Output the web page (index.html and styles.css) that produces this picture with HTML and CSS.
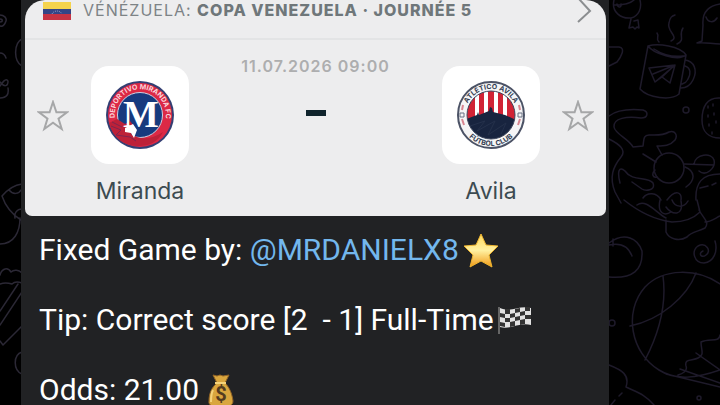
FILE: index.html
```html
<!DOCTYPE html>
<html lang="en">
<head>
    <meta charset="UTF-8">
    <meta name="viewport" content="width=device-width, initial-scale=1">
    <title>Fixed Game</title>
    <link rel="stylesheet" href="styles.css">
</head>
<body>
<!-- chat wallpaper -->
<svg class="wallpaper wallpaper-left" width="22" height="405" viewBox="0 0 22 405" aria-hidden="true">
    <path d="M0 15c4 0 7 3 6 6s-3 6-6 5M0 19c3 0 3 3 0 3M0 53c3 0 5 2 6 5M22 39c-8 4-9 22 0 27M0 82c4 5 8 5 8-1-2-4-6 2-8 5M0 98c7 0 9-4 8-10"/>
    <path d="M22 184c-8 1-14 5-20 12 3 9 8 17 19 24M9 190c4 5 10 4 12 0M22 209c-5 0-8 4-7 9M20 218c0 14-6 26-20 26"/>
    <path d="M0 275c2-7 8-8 11-3 3-3 8-2 11 1M0 284c5-2 9-1 12 0 3-3 7-2 10-1M18 284 0 311M22 292 0 325M22 326 3 345l-3-4M22 352c-9 3-9 18 0 22"/>
</svg>
<svg class="wallpaper wallpaper-right" width="120" height="405" viewBox="600 0 120 405" aria-hidden="true">
    <path d="M614 0c-3 12 7 19 17 18 8-2 11-10 9-18M614 5c8 0 16-1 20-5M617 4c1 5 5 3 4 0M631 19l-2 9 4-1 2 2 2-2 2 1-1-8-4 1"/>
    <path d="M648 46c10-3 32 0 38 9-8 7-33-2-38-9l-8 43c8 9 31 12 39 5l7-39M654 49c9 6 19 8 29 7M685 60c9 1 13 10 8 20-3 6-7 8-12 8M685 66c6 2 6 8 3 13-2 4-3 4-6 5"/>
    <path d="M649 68l26-3-5 18-8-6-7 5zM653 74l22-9-20 17M662 77l13-12M659 42c-4-4 1-5-2-9M671 41c9-4-5-10-2-18 1-6 3-7 6-8M677 44c9-4 1-9 6-16"/>
    <path d="M720 4c-13 2-18 9-17 21l-1 16-5 2c9-1 14 1 23 1M706 17c2 6 8 6 11 1M609 47h10c7 1 2 10-2 15l-8 4"/>
    <circle cx="686" cy="110" r="3"/>
    <path d="M609 116c9-7 23-7 34-6 6 2 5 8-2 8-14-2-28 0-27 9 1 7 15 12 19 20l10-1c1-6 0-11 6-11 7 0 13 1 20-3 6-2 9 3 6 8-5 6-11 6-18 6l5 9M609 139c10 5 18 11 12 18-8 10-12 20-6 35l6 11"/>
    <circle cx="669" cy="168" r="15"/>
    <path d="M643 154l13 8M684 164l30 1M685 167c10 4 11 13 1 20M694 164c1-10 18-12 20-4s-8 17-15 11M620 183c-3-12-1-17 5-12 7 11 23 5 28 12 3 8-8 8-11 6l-10-7M643 198c4-6 14-6 18 2M667 200c9-12 15-7 14 0M720 174c-18 0-25 9-24 26M700 188l8-2m4-1 4-2M655 170c-4 4-2 8 2 7"/>
    <path d="M720 98c-13-1-18 9-18 22 0 12 7 18 18 18M708 106v2m5-4v2m-5 9v2m6-4v2m-5 9v2m7-5v2m-4 9v2"/>
    <path d="M624 200c15 12 32 20 48 22 11 0 21-3 28-10l-3-12M637 205c9-7 19 8 29 13M660 200c-3 14 5 16 11 12M672 200c3 8 12 8 16 1M681 201c3 16-9 14-15 6M699 210c4 8 11 12 6 18-7 4-13 3-18 9-8 5-18 2-21-5v-12M720 216c-6 3-10 6-15 6"/>
    <path d="M609 243c16-12 29-4 33 8 1 19-9 28-33 26M609 245c13-3 20 3 23 11M613 239v7M715 241c3 10-1 21-11 22-10 0-13-12-6-17 8-4 14 5 8 9-5 4-8-2-3-4"/>
    <path d="M720 284c-23-16-57-16-75 3-22 25-14 66 14 83 17 11 38 8 61 0M663 276c4 30-5 59-18 84M696 273c-9 24-36 47-66 53M720 335c-1 8-10 3-19 7 0 8 4 13-3 16-5 3-14 0-12 8 2 5-4 8-8 9M666 374l54 13M696 353l24 17M680 369l40 14"/>
    <circle cx="612" cy="323" r="3"/><circle cx="699" cy="398" r="2"/>
    <path d="M609 365c13 5 21 10 17 22 10 5 19 7 28 18M622 393l-3 3m-4 4-4 5"/>
</svg>

<main class="message">
    <section class="card">
        <header class="league">
            <svg class="flag" width="28" height="20" viewBox="0 0 28 20" role="img" aria-label="Venezuela">
                <path fill="#f5d34d" d="M0 2h28v9H0z"/>
                <path fill="#344586" d="M0 9h28v6H0z"/>
                <path fill="#c63343" d="M0 14h28v6H0z"/>
                <path fill="none" stroke="#8f9bc4" stroke-dasharray="1 1" d="M9 14c2-4 8-4 10 0"/>
            </svg>
            <h1 class="league-name">VÉNÉZUELA: <b>COPA VENEZUELA · JOURNÉE 5</b></h1>
            <svg class="chevron" width="16" height="24" viewBox="0 0 16 24" aria-hidden="true">
                <path d="M3-1l11 12L2 22"/>
            </svg>
        </header>
        <div class="match">
            <button class="favourite" aria-label="Add Miranda to favourites">
                <svg width="32" height="32" viewBox="0 0 32 32"><path d="M16 2l3.400 10.200H30l-8.500 6.400 3.200 10.400-8.700-6.300L7.300 29l3.200-10.400L2 12.200h10.600z"/></svg>
            </button>
            <div class="team">
                <div class="crest">
                    <svg width="70" height="70" viewBox="0 0 70 70" role="img" aria-label="Deportivo Miranda FC">
                        <defs><path id="arc-m" d="M10 38a25.500 25.500 0 1 1 47 10l-4 6"/></defs>
                        <circle cx="35" cy="35" r="34" fill="#343f73"/>
                        <circle cx="35" cy="35" r="32" fill="#dc2945"/>
                        <circle cx="35" cy="35" r="22.500" fill="#173a7e" stroke="#ccd0e2"/>
                        <text class="crest-text crest-text-red"><textPath href="#arc-m">DEPORTIVO MIRANDA FC</textPath></text>
                        <path fill="#bd2138" d="M4 43l8-4 8 5 5-3 4 5-3 8c9 6 20 6 32-2-5 10-14 14-24 14C19 66 8 58 4 43z"/>
                        <path fill="none" stroke="#7d2550" d="M6 46l10 4-5 5 14 2 6 4M7 42l10 5"/>
                        <path fill="#fff" d="M20 48l8-4 4 6-3 8-3-5-6-1z"/>
                        <text class="crest-letter" x="36" y="47">M</text>
                    </svg>
                </div>
                <span class="team-name">Miranda</span>
            </div>
            <div class="kickoff">
                <time datetime="2026-07-11T09:00">11.07.2026 09:00</time>
                <span class="score"></span>
            </div>
            <div class="team">
                <div class="crest">
                    <svg width="70" height="70" viewBox="0 0 70 70" role="img" aria-label="Atlético Ávila Fútbol Club">
                        <defs>
                            <path id="arc-top" d="M9 35a26 26 0 0 1 52 0"/>
                            <path id="arc-bottom" d="M4 35a31 31 0 0 0 62 0"/>
                            <clipPath id="inner"><circle cx="35" cy="35" r="24"/></clipPath>
                        </defs>
                        <circle cx="35" cy="35" r="33" fill="#f5f5f6" stroke="#4c5366" stroke-width="2"/>
                        <g clip-path="url(#inner)">
                            <path fill="#fff" d="M10 10h50v50H10z"/>
                            <path fill="#d12335" d="M11 10h8v30h-8zM23 10h5v30h-5zM32 10h6v30h-6zM42 10h5v30h-5zM51 10h8v30h-8z"/>
                            <path fill="#18243f" d="M10 39l11-4 1-3 1 3 10-4 1-4 2 1 1 4 12 3 11 5v22H10z"/>
                            <path fill="none" stroke="#24304b" d="M14 46l15-5-8 10 18-10-7 14 18-12-5 11"/>
                        </g>
                        <circle cx="35" cy="35" r="24" fill="none" stroke="#3d465c"/>
                        <text class="crest-text"><textPath href="#arc-top" startOffset="50%">ATLÉTICO ÁVILA</textPath></text>
                        <text class="crest-text"><textPath href="#arc-bottom" startOffset="50%">FÚTBOL CLUB</textPath></text>
                        <path fill="none" stroke="#d88590" stroke-width="2" d="M7 25l-1 5M6 39l2 6M63 25l1 5M64 39l-2 6"/>
                        <path fill="none" stroke="#687083" d="M4 33h4v4H4zM62 33h4v4h-4z"/>
                    </svg>
                </div>
                <span class="team-name">Avila</span>
            </div>
            <button class="favourite" aria-label="Add Avila to favourites">
                <svg width="32" height="32" viewBox="0 0 32 32"><path d="M16 2l3.400 10.200H30l-8.500 6.400 3.200 10.400-8.700-6.300L7.300 29l3.200-10.400L2 12.200h10.600z"/></svg>
            </button>
        </div>
    </section>
    <div class="text">
        <p>Fixed Game by: <a href="#">@MRDANIELX8</a>
            <svg class="emoji" width="36" height="36" viewBox="0 0 36 36" role="img" aria-label="star">
                <defs><linearGradient id="gold" x2="0" y2="1"><stop stop-color="#ffd95c"/><stop offset=".5" stop-color="#fff0a0"/><stop offset="1" stop-color="#f19b16"/></linearGradient></defs>
                <path fill="url(#gold)" stroke="#efb52f" stroke-linejoin="round" d="M18 2l5 11 12 1-9 9 3 12-11-6-11 6 3-12-9-9 12-1z"/>
            </svg>
        </p>
        <p>Tip: Correct score [2&nbsp; - 1] Full-Time
            <svg class="emoji" width="36" height="36" viewBox="0 0 36 36" role="img" aria-label="chequered flag">
                <path fill="#e2e2e2" d="M2 6c11 5 19-3 31 0v17c-12-3-20 5-31 2z"/>
                <path fill="#333" d="M7 7h5v5H7zM17 7l5-1v4l-5 1zM27 5h5v4h-5zM2 11l5 1v4l-5-1zM12 12l5-1v4l-5 1zM22 10l5-1v4l-5 1zM7 16h5v4H7zM17 15l5-1v4l-5 1zM27 13h6v4h-6zM2 20l5 1v4l-5-1zM12 20l5-1v5l-5 1zM22 18l5-1v5l-5 1z"/>
                <path fill="none" stroke="#666" stroke-width="2" d="M1 5v27"/>
            </svg>
        </p>
        <p>Odds: 21.00
            <svg class="emoji" width="36" height="36" viewBox="0 0 36 36" role="img" aria-label="money bag">
                <path fill="#d9a63e" stroke="#926425" d="M10 3l4 1 3-1 3 1 6-1-4 8c4 4 7 10 8 18 0 5-5 6-12 6S5 34 6 29c0-8 3-14 8-18z"/>
                <path fill="none" stroke="#f5d37b" stroke-width="2" d="M12 11h11M10 18c-2 4-2 8-2 12"/>
                <text class="dollar" x="18" y="29">$</text>
            </svg>
        </p>
    </div>
</main>
</body>
</html>
```
FILE: styles.css
```css
* {
    box-sizing: border-box;
}

body {
    margin: 0;
    min-height: 100vh;
    background-color: #000;
    font-family: Roboto, "Liberation Sans", sans-serif;
}

.wallpaper {
    position: absolute;
    top: 0;
    fill: none;
    stroke: #1e1a2a;
    stroke-width: 1.5;
    stroke-linecap: round;
    stroke-linejoin: round;
}

.wallpaper-left {
    left: 0;
    stroke: #2b2835;
}

.wallpaper-right {
    right: 0;
}

.message {
    position: relative;
    margin: 0 111px 0 21px;
    padding: 0 3px 0 4px;
    background-color: #212224;
    min-height: 100vh;
}

.card {
    overflow: hidden;
    border-radius: 20px 20px 7px 7px;
    background-color: #ededee;
    color: #3c4b51;
    font-family: Inter, "Liberation Sans", sans-serif;
}

.league {
    display: flex;
    align-items: flex-start;
    height: 40px;
    padding: 0 14px 0 18px;
    border-bottom: 2px solid #e3e4e5;
}

.league-name {
    flex: 1;
    margin: 0 0 0 12px;
    color: #7d8386;
    font-size: 16px;
    font-weight: 400;
    line-height: 20px;
    letter-spacing: 1px;
}

.league-name b {
    color: #6f777a;
    font-weight: 800;
}

.chevron {
    fill: none;
    stroke: #8b8e90;
    stroke-width: 2;
}

.match {
    display: flex;
    padding: 26px 12px 10px;
}

.favourite {
    align-self: flex-start;
    width: 32px;
    height: 32px;
    margin-top: 34px;
    padding: 0;
    border: 0;
    background: none;
    cursor: pointer;
}

.favourite path {
    fill: none;
    stroke: #a6a7a8;
    stroke-width: 2;
}

.team {
    display: flex;
    flex-direction: column;
    align-items: center;
    margin: 0 22px;
}

.crest {
    display: flex;
    align-items: center;
    justify-content: center;
    width: 98px;
    height: 98px;
    border-radius: 18px;
    background-color: #fff;
}

.crest-text {
    fill: #323c51;
    font: bold 7px Inter, sans-serif;
    text-anchor: middle;
}

.crest-text-red {
    fill: #fbd4da;
    text-anchor: start;
}

.crest-letter {
    fill: #fff;
    font: bold 38px "Liberation Serif", serif;
    text-anchor: middle;
}

.team-name {
    margin-top: 12px;
    font-size: 23px;
    line-height: 30px;
}

.kickoff {
    display: flex;
    flex: 1;
    flex-direction: column;
    align-items: center;
    margin-top: -10px;
    color: #adaeaf;
    font-size: 16px;
    font-weight: 600;
    line-height: 20px;
    letter-spacing: 1px;
}

.score {
    width: 20px;
    height: 6px;
    margin-top: 34px;
    background-color: #10242c;
}

.text {
    padding: 16px 14px 0;
    color: #fff;
    font-size: 30px;
    line-height: 35px;
}

.text p {
    height: 35px;
    margin: 0 0 35px;
    white-space: nowrap;
}

.text p:last-child {
    height: 33px;
    margin: 0;
    overflow: hidden;
}

.text a {
    color: #73b7ed;
    text-decoration: none;
}

.emoji {
    margin: -8px 0 -8px -3px;
    vertical-align: 0;
}

.dollar {
    fill: #533b20;
    font: bold 20px Roboto, sans-serif;
    text-anchor: middle;
}
```
